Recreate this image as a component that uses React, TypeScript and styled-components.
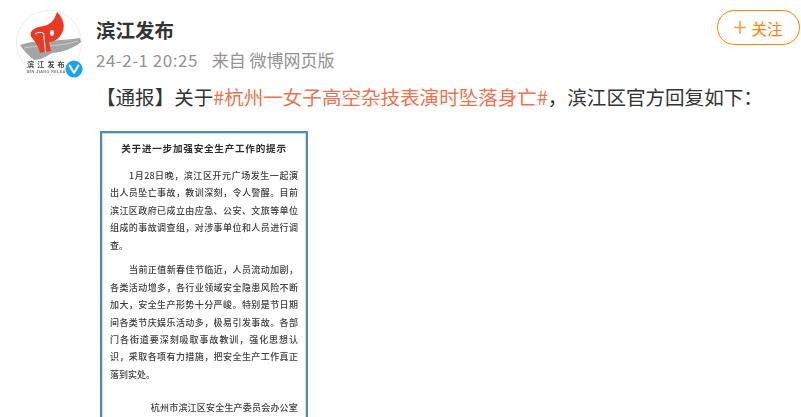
import styled, { createGlobalStyle } from "styled-components";

const GlobalStyle = createGlobalStyle`
  html, body {
    margin: 0;
    padding: 0;
    background: #fff;
    overflow: hidden;
  }
`;

const Page = styled.div`
  width: 801px;
  height: 417px;
  overflow: hidden;
  padding: 10px 1px 0 16px;
  box-sizing: border-box;
  font-family: "Noto Sans CJK SC", "Liberation Sans", sans-serif;
  color: #333;
`;

const Header = styled.header`
  display: flex;
  align-items: flex-start;
`;

const AvatarWrap = styled.div`
  position: relative;
  width: 66px;
  height: 66px;
  flex: none;
`;

const AvatarCircle = styled.svg`
  display: block;
  width: 66px;
  height: 66px;
  filter: blur(0.4px);
`;

const VerifiedBadge = styled.svg`
  position: absolute;
  right: -2px;
  bottom: -3px;
  width: 20px;
  height: 20px;
`;

const Author = styled.div`
  flex: 1;
  margin-left: 14px;
`;

const Name = styled.div`
  font-size: 19.5px;
  font-weight: 700;
  line-height: 28px;
  margin-top: 6px;
  color: #333;
`;

const Meta = styled.div`
  display: flex;
  gap: 14px;
  font-size: 17px;
  line-height: 24px;
  margin-top: 4px;
  color: #939393;
`;

const MetaDate = styled.span`
  letter-spacing: 0.5px;
`;

const FollowButton = styled.button`
  display: flex;
  align-items: center;
  justify-content: center;
  gap: 5px;
  width: 83px;
  height: 35px;
  padding: 0;
  background: #fff;
  border: 1px solid #ff8200;
  border-radius: 18px;
  color: #ff8200;
  font-family: inherit;
  font-size: 15.5px;
`;

const Post = styled.p`
  margin: 7px 0 0 80px;
  font-size: 19.56px;
  line-height: 28px;
  white-space: nowrap;
  color: #333;
`;

const Topic = styled.span`
  color: #eb7350;
`;

const Notice = styled.article`
  width: 208px;
  height: 300px;
  margin: 20px 0 0 84px;
  padding: 7px 8px 0;
  box-sizing: border-box;
  border: 2px solid #4f8db5;
  outline: 1px solid #c9dce8;
  outline-offset: -3px;
  background: #fff;
  color: #3c3c3c;
  filter: blur(0.6px);
`;

const NoticeTitle = styled.h3`
  margin: 0 0 11px;
  font-size: 9.6px;
  line-height: 16px;
  font-weight: 700;
  text-align: center;
  letter-spacing: 0.75px;
  color: #2d2d2d;
`;

const NoticeLine = styled.div<{ $indent?: boolean; $last?: boolean }>`
  height: 17.4px;
  line-height: 17.4px;
  font-size: 9px;
  font-weight: 500;
  text-align: ${(p) => (p.$last ? "left" : "justify")};
  text-align-last: ${(p) => (p.$last ? "left" : "justify")};
  text-indent: ${(p) => (p.$indent ? "19px" : "0")};
`;

const Paragraph = styled.section`
  margin-bottom: 7.5px;
`;

const Signature = styled.div`
  margin-top: 16px;
  font-size: 9px;
  font-weight: 500;
  line-height: 17.4px;
  text-align: right;
  letter-spacing: 0.2px;
`;

const paragraphs = [
  [
    "1月28日晚,滨江区开元广场发生一起演",
    "出人员坠亡事故,教训深刻,令人警醒。目前",
    "滨江区政府已成立由应急、公安、文旅等单位",
    "组成的事故调查组,对涉事单位和人员进行调",
    "查。",
  ],
  [
    "当前正值新春佳节临近,人员流动加剧,",
    "各类活动增多,各行业领域安全隐患风险不断",
    "加大,安全生产形势十分严峻。特别是节日期",
    "间各类节庆娱乐活动多,极易引发事故。各部",
    "门各街道要深刻吸取事故教训,强化思想认",
    "识,采取各项有力措施,把安全生产工作真正",
    "落到实处。",
  ],
];

const Avatar = () => (
  <AvatarCircle viewBox="0 0 66 66">
    <circle cx="33" cy="33" r="32.5" fill="#fff" stroke="#ececec" />
    <path
      d="M4 35 C16 30 36 32 64 28 L65 32 C58 38 48 42 36 43 C30 47 24 50 18 50 C12 45 7 40 4 35 Z"
      fill="#a3a4a6"
    />
    <path d="M8 38 C20 35 40 38 62 31" stroke="#c9cacb" strokeWidth="1" fill="none" />
    <path
      d="M41 2 C47 8 50 16 46 23 C43 29 38 32 33 32 L35 41 L24 43 C23 37 20 33 16 28 C13 24 15 20 20 18 C27 15 36 18 41 2 Z"
      fill="#ea3a25"
    />
    <path d="M19 24 C22 22 25 22 27 23 M27.5 23 L29.5 42" stroke="#fff" strokeWidth="1" fill="none" />
    <ellipse cx="36" cy="23" rx="2" ry="3" fill="#fff" />
    <text x="11" y="57" fontSize="7" fontWeight="700" fill="#444" letterSpacing="3.2">
      滨江发布
    </text>
    <text x="11" y="62.5" fontSize="3.6" fontWeight="700" fill="#777" fontFamily="Liberation Sans, sans-serif" letterSpacing="0.5">
      BIN JIANG RELEASE
    </text>
  </AvatarCircle>
);

const App = () => {
  return (
    <Page>
      <GlobalStyle />
      <Header>
        <AvatarWrap>
          <Avatar />
          <VerifiedBadge viewBox="0 0 20 20">
            <circle cx="10" cy="10" r="9.6" fill="#fff" />
            <circle cx="10" cy="10" r="8.6" fill="#1da1f2" />
            <path d="M5.6 6.6 L10 14 L14.4 6.6" fill="none" stroke="#fff" strokeWidth="2" strokeLinecap="round" strokeLinejoin="round" />
          </VerifiedBadge>
        </AvatarWrap>
        <Author>
          <Name>滨江发布</Name>
          <Meta>
            <MetaDate>24-2-1 20:25</MetaDate>
            <span>来自 微博网页版</span>
          </Meta>
        </Author>
        <FollowButton>
          <svg width="12" height="13" viewBox="0 0 12 13">
            <path d="M6 0 V13 M0 6.5 H12" stroke="#ff9a45" strokeWidth="1.6" />
          </svg>
          关注
        </FollowButton>
      </Header>
      <Post>
        【通报】关于<Topic>#杭州一女子高空杂技表演时坠落身亡#</Topic>{"\uFF0C"}滨江区官方回复如下{"\uFF1A"}
      </Post>
      <Notice>
        <NoticeTitle>关于进一步加强安全生产工作的提示</NoticeTitle>
        {paragraphs.map((lines) => (
          <Paragraph key={lines[0]}>
            {lines.map((line, i) => (
              <NoticeLine key={line} $indent={i === 0} $last={i === lines.length - 1}>
                {line.replace(/,/g, "\uFF0C")}
              </NoticeLine>
            ))}
          </Paragraph>
        ))}
        <Signature>杭州市滨江区安全生产委员会办公室</Signature>
      </Notice>
    </Page>
  );
};

export default App;
